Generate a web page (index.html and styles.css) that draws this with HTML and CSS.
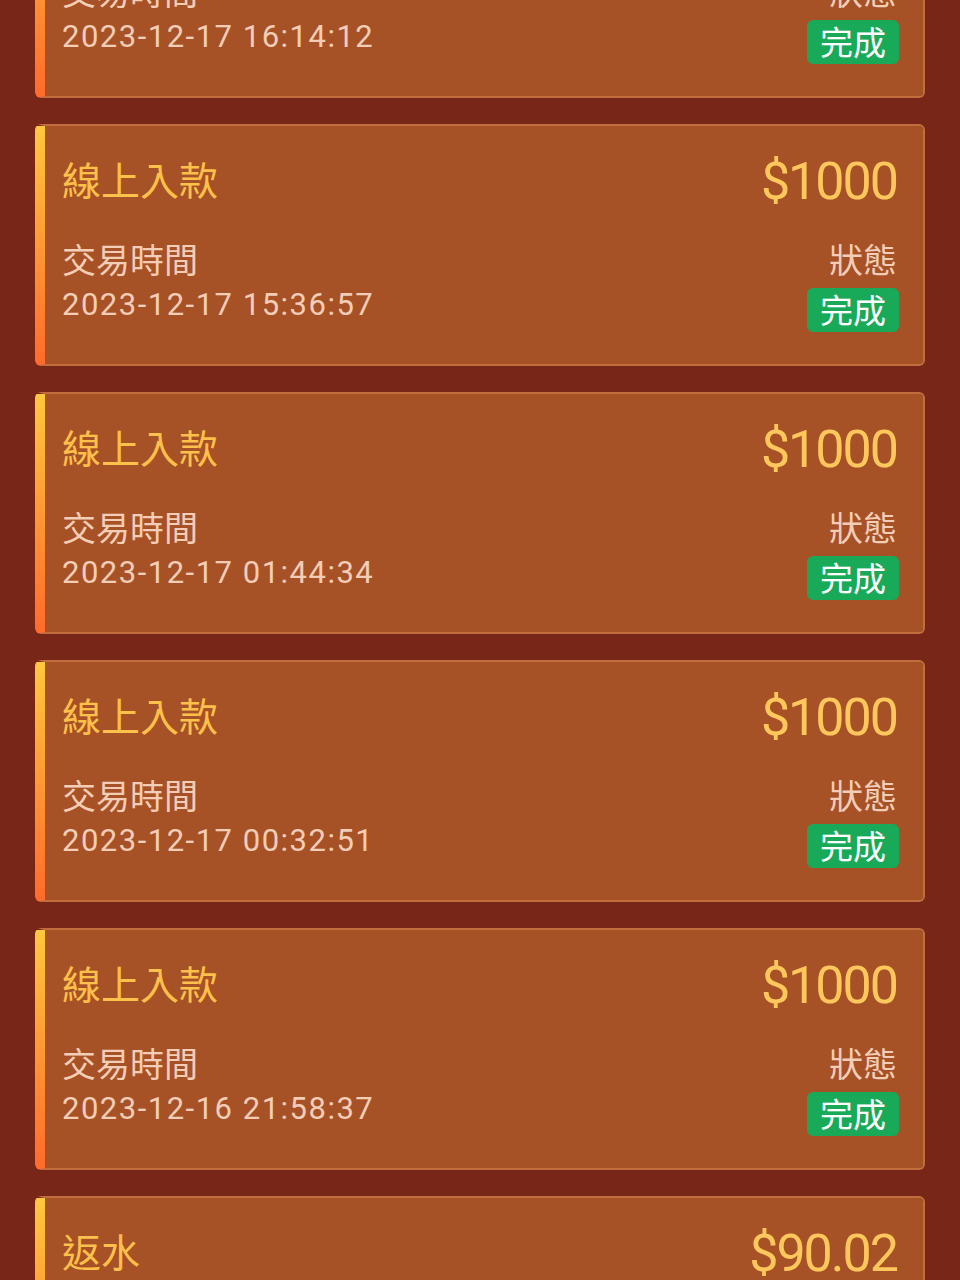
FILE: index.html
```html
<!DOCTYPE html>
<html lang="zh-Hant">
<head>
  <meta charset="UTF-8" />
  <title>交易紀錄</title>
  <meta name="viewport" content="width=device-width, initial-scale=1.0" />
  <link rel="stylesheet" href="styles.css">
</head>
<body>

  <div class="list">

    <div class="record">
      <div class="head">
        <span class="type">線上入款</span>
        <span class="amount">$1000</span>
      </div>
      <div class="info">
        <div class="left">
          <div class="label">交易時間</div>
          <div class="time">2023-12-17 16:14:12</div>
        </div>
        <div class="right">
          <div class="label">狀態</div>
          <span class="status">完成</span>
        </div>
      </div>
    </div>

    <div class="record">
      <div class="head">
        <span class="type">線上入款</span>
        <span class="amount">$1000</span>
      </div>
      <div class="info">
        <div class="left">
          <div class="label">交易時間</div>
          <div class="time">2023-12-17 15:36:57</div>
        </div>
        <div class="right">
          <div class="label">狀態</div>
          <span class="status">完成</span>
        </div>
      </div>
    </div>

    <div class="record">
      <div class="head">
        <span class="type">線上入款</span>
        <span class="amount">$1000</span>
      </div>
      <div class="info">
        <div class="left">
          <div class="label">交易時間</div>
          <div class="time">2023-12-17 01:44:34</div>
        </div>
        <div class="right">
          <div class="label">狀態</div>
          <span class="status">完成</span>
        </div>
      </div>
    </div>

    <div class="record">
      <div class="head">
        <span class="type">線上入款</span>
        <span class="amount">$1000</span>
      </div>
      <div class="info">
        <div class="left">
          <div class="label">交易時間</div>
          <div class="time">2023-12-17 00:32:51</div>
        </div>
        <div class="right">
          <div class="label">狀態</div>
          <span class="status">完成</span>
        </div>
      </div>
    </div>

    <div class="record">
      <div class="head">
        <span class="type">線上入款</span>
        <span class="amount">$1000</span>
      </div>
      <div class="info">
        <div class="left">
          <div class="label">交易時間</div>
          <div class="time">2023-12-16 21:58:37</div>
        </div>
        <div class="right">
          <div class="label">狀態</div>
          <span class="status">完成</span>
        </div>
      </div>
    </div>

    <div class="record">
      <div class="head">
        <span class="type">返水</span>
        <span class="amount">$90.02</span>
      </div>
      <div class="info">
        <div class="left">
          <div class="label">交易時間</div>
          <div class="time">2023-12-16 20:00:00</div>
        </div>
        <div class="right">
          <div class="label">狀態</div>
          <span class="status">完成</span>
        </div>
      </div>
    </div>

  </div>

</body>
</html>
```

FILE: styles.css
```css
html, body {
  margin: 0;
  background: #772617;
  font-family: Roboto, "Noto Sans CJK TC", sans-serif;
  overflow: hidden;
}

.list {
  display: flex;
  flex-direction: column;
  gap: 26px;
  padding: 0 35px;
  margin-top: -144px;
}

.record {
  border: 2px solid #c26d3e;
  border-left: 10px solid transparent;
  border-radius: 6px;
  background:
    linear-gradient(#ffc83f, #ff6a2b) 0 0 / 10px 100% no-repeat border-box,
    linear-gradient(#a75127, #a75127) padding-box;
  padding: 25px 26px 32px 17px;
}

.head {
  display: flex;
  justify-content: space-between;
  align-items: center;
  height: 60px;
}

.type {
  font-family: "Noto Sans CJK TC", sans-serif;
  font-size: 39px;
  line-height: 50px;
  margin-bottom: 6px;
  color: #fdc04a;
}

.amount {
  font-size: 52px;
  letter-spacing: -2px;
  color: #ffc75c;
}

.info {
  display: flex;
  justify-content: space-between;
  margin-top: 28px;
}

.right {
  display: flex;
  flex-direction: column;
  align-items: flex-end;
}

.label {
  font-family: "Noto Sans CJK TC", sans-serif;
  font-size: 34px;
  line-height: 40px;
  margin-bottom: 4px;
  color: #f3cdb6;
}

.time {
  font-size: 31px;
  line-height: 44px;
  letter-spacing: 1.5px;
  color: #f3cdb6;
}

.status {
  margin-top: 5px;
  height: 44px;
  line-height: 42px;
  padding: 0 13px;
  margin-right: -2px;
  border-radius: 6px;
  background: #19aa59;
  color: #fff;
  font-family: "Noto Sans CJK TC", sans-serif;
  font-size: 33px;
}
```
